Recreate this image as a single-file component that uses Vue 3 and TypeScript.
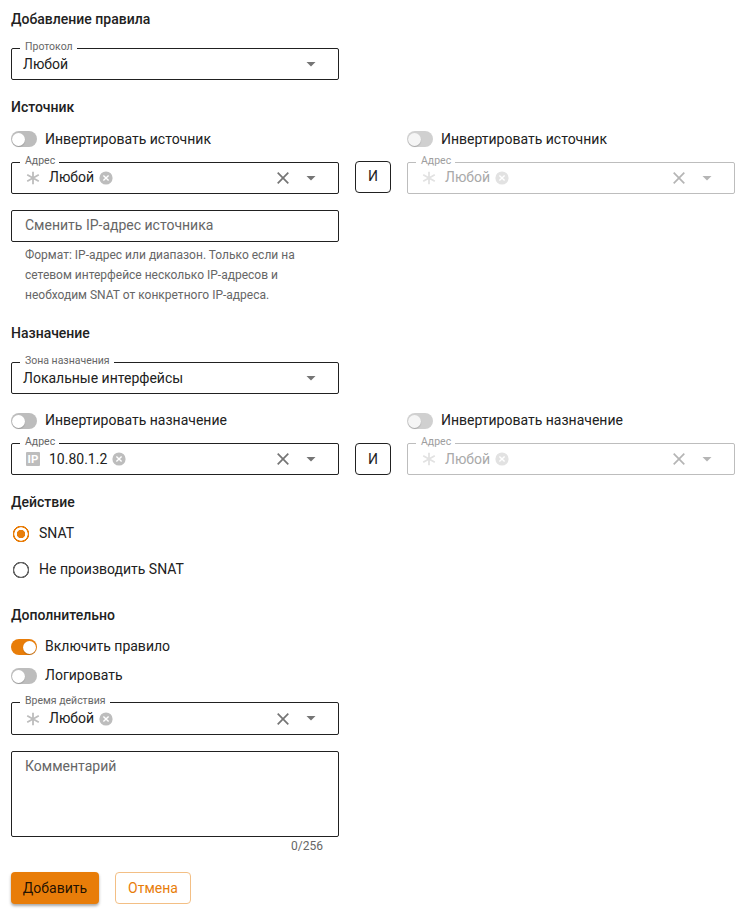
<script setup lang="ts">
import { defineComponent, h, ref } from 'vue'

interface AddressPair {
  invertLabel: string
  first: { kind: 'any' | 'ip'; value: string }
  second: { kind: 'any' | 'ip'; value: string }
}

const source: AddressPair = {
  invertLabel: 'Инвертировать источник',
  first: { kind: 'any', value: 'Любой' },
  second: { kind: 'any', value: 'Любой' },
}
const destination: AddressPair = {
  invertLabel: 'Инвертировать назначение',
  first: { kind: 'ip', value: '10.80.1.2' },
  second: { kind: 'any', value: 'Любой' },
}

const action = ref<'snat' | 'none'>('snat')
const enabled = ref(true)
const logging = ref(false)

const Caret = defineComponent(() => () =>
  h('svg', { width: 10, height: 5, viewBox: '0 0 10 5' }, [
    h('path', { d: 'M0.5 0H9.5L5 4.6Z', fill: 'currentColor' }),
  ]))

const Cross = defineComponent(() => () =>
  h('svg', { width: 12, height: 12, viewBox: '0 0 12 12' }, [
    h('path', { d: 'M0.7 0.7L11.3 11.3M11.3 0.7L0.7 11.3', stroke: 'currentColor', 'stroke-width': 1.7 }),
  ]))

const Remove = defineComponent(() => () =>
  h('svg', { width: 14, height: 14, viewBox: '0 0 14 14' }, [
    h('circle', { cx: 7, cy: 7, r: 6.6, fill: 'currentColor' }),
    h('path', { d: 'M4.4 4.4L9.6 9.6M9.6 4.4L4.4 9.6', stroke: '#fff', 'stroke-width': 1.4 }),
  ]))

const Kind = defineComponent({
  props: { kind: { type: String, required: true } },
  setup(props) {
    return () =>
      props.kind === 'ip'
        ? h('svg', { width: 14, height: 14, viewBox: '0 0 14 14' }, [
            h('rect', { width: 14, height: 14, rx: 1, fill: 'currentColor' }),
            h('text', {
              x: 7, y: 11, fill: '#fff', 'text-anchor': 'middle', 'font-size': 11.5,
              'font-weight': 700, 'font-family': 'Roboto, sans-serif',
            }, 'IP'),
          ])
        : h('svg', { width: 14, height: 14, viewBox: '0 0 14 14' }, [
            h('path', {
              d: 'M7 0.8V13.2M1.2 3.8L12.8 10.2M12.8 3.8L1.2 10.2',
              stroke: 'currentColor', 'stroke-width': 1.8,
            }),
          ])
  },
})
</script>

<template>
  <form class="rule-form" @submit.prevent>
    <h2 class="heading">Добавление правила</h2>
    <div class="field protocol">
      <span class="label">Протокол</span>
      <span class="value">Любой</span>
      <Caret class="caret" />
    </div>

    <h2 class="heading source-heading">Источник</h2>
    <div class="pair source-pair">
      <div class="side">
        <div class="switch-row"><span class="switch"></span>{{ source.invertLabel }}</div>
        <div class="field chips">
          <span class="label">Адрес</span>
          <Kind class="kind" :kind="source.first.kind" />
          <span class="value">{{ source.first.value }}</span>
          <Remove class="remove" />
          <Cross class="clear" />
          <Caret class="caret" />
        </div>
      </div>
      <button class="and" type="button">И</button>
      <div class="side">
        <div class="switch-row"><span class="switch off"></span>{{ source.invertLabel }}</div>
        <div class="field chips disabled">
          <span class="label">Адрес</span>
          <Kind class="kind" :kind="source.second.kind" />
          <span class="value">{{ source.second.value }}</span>
          <Remove class="remove" />
          <Cross class="clear" />
          <Caret class="caret" />
        </div>
      </div>
    </div>
    <div class="field input"><span class="placeholder">Сменить IP-адрес источника</span></div>
    <p class="hint">
      Формат: IP-адрес или диапазон. Только если на<br />сетевом интерфейсе несколько IP-адресов и<br />необходим SNAT от конкретного IP-адреса.
    </p>

    <h2 class="heading target-heading">Назначение</h2>
    <div class="field zone">
      <span class="label">Зона назначения</span>
      <span class="value">Локальные интерфейсы</span>
      <Caret class="caret" />
    </div>
    <div class="pair target-pair">
      <div class="side">
        <div class="switch-row"><span class="switch"></span>{{ destination.invertLabel }}</div>
        <div class="field chips">
          <span class="label">Адрес</span>
          <Kind class="kind" :kind="destination.first.kind" />
          <span class="value">{{ destination.first.value }}</span>
          <Remove class="remove" />
          <Cross class="clear" />
          <Caret class="caret" />
        </div>
      </div>
      <button class="and" type="button">И</button>
      <div class="side">
        <div class="switch-row"><span class="switch off"></span>{{ destination.invertLabel }}</div>
        <div class="field chips disabled">
          <span class="label">Адрес</span>
          <Kind class="kind" :kind="destination.second.kind" />
          <span class="value">{{ destination.second.value }}</span>
          <Remove class="remove" />
          <Cross class="clear" />
          <Caret class="caret" />
        </div>
      </div>
    </div>

    <h2 class="heading action-heading">Действие</h2>
    <div class="radios">
      <div class="radio-row" @click="action = 'snat'">
        <span class="radio" :class="{ checked: action === 'snat' }"></span>SNAT
      </div>
      <div class="radio-row" @click="action = 'none'">
        <span class="radio" :class="{ checked: action === 'none' }"></span>Не производить SNAT
      </div>
    </div>

    <h2 class="heading extra-heading">Дополнительно</h2>
    <div class="switches">
      <div class="switch-row" @click="enabled = !enabled">
        <span class="switch" :class="{ on: enabled }"></span>Включить правило
      </div>
      <div class="switch-row" @click="logging = !logging">
        <span class="switch" :class="{ on: logging }"></span>Логировать
      </div>
    </div>
    <div class="field chips time">
      <span class="label">Время действия</span>
      <Kind class="kind" kind="any" />
      <span class="value">Любой</span>
      <Remove class="remove" />
      <Cross class="clear" />
      <Caret class="caret" />
    </div>
    <div class="field comment"><span class="placeholder">Комментарий</span></div>
    <div class="counter">0/256</div>

    <div class="buttons">
      <button class="primary" type="submit">Добавить</button>
      <button class="secondary" type="button">Отмена</button>
    </div>
  </form>
</template>

<style>
body {
  background: #fff;
}
</style>

<style scoped>
.rule-form {
  box-sizing: border-box;
  width: 743px;
  height: 916px;
  padding: 9px 8px 0 11px;
  font: 400 14px/20px Roboto, sans-serif;
  color: #212121;
}
.heading {
  margin: 0;
  font-size: 14px;
  font-weight: 500;
  line-height: 20px;
}
.field {
  position: relative;
  box-sizing: border-box;
  display: flex;
  align-items: center;
  width: 328px;
  height: 32px;
  padding: 0 22px 0 11px;
  border: 1px solid #212121;
  border-radius: 2px;
}
.label {
  position: absolute;
  left: 8px;
  top: -9px;
  padding: 0 4px 0 5px;
  background: #fff;
  color: #666;
  font-size: 10.5px;
  line-height: 14px;
  white-space: nowrap;
}
.caret {
  flex: none;
  margin-left: auto;
  color: #757575;
}
.chips {
  padding-left: 14px;
}
.chips .value {
  margin-left: 9px;
  padding-bottom: 2px;
}
.target-pair .chips .value {
  padding-bottom: 0;
}
.kind,
.remove {
  flex: none;
  color: #bdbdbd;
}
.remove {
  margin-left: 5px;
}
.clear {
  flex: none;
  margin-left: auto;
  color: #757575;
}
.clear + .caret {
  margin-left: 17px;
}
.disabled {
  border-color: #bdbdbd;
}
.disabled .label {
  color: #9e9e9e;
}
.disabled .value {
  color: #a9a9a9;
}
.disabled .kind,
.disabled .remove {
  color: #e2e2e2;
}
.disabled .clear,
.disabled .caret {
  color: #b5b5b5;
}
.placeholder {
  color: #666;
}
.protocol {
  margin-top: 19px;
}
.source-heading {
  margin-top: 17px;
}
.pair {
  display: flex;
  gap: 16px;
  align-items: flex-end;
}
.source-pair {
  margin-top: 12px;
}
.target-pair {
  margin-top: 16px;
}
.side .field {
  margin-top: 13px;
}
.switch-row {
  display: flex;
  align-items: center;
  gap: 8px;
  height: 20px;
}
.switch {
  position: relative;
  width: 26px;
  height: 16px;
  border-radius: 8px;
  background: #bdbdbd;
}
.target-pair .switch,
.switches .switch {
  margin-top: 2px;
}
.switch::after {
  content: '';
  position: absolute;
  left: 1.3px;
  top: 1.5px;
  width: 13px;
  height: 13px;
  border-radius: 50%;
  background: #fff;
  box-shadow: 0 1px 1px rgba(0, 0, 0, 0.2);
}
.switch.on {
  background: #e87d09;
}
.switch.on::after {
  left: 12px;
}
.switch.off {
  background: #d0d0d0;
}
.switch.off::after {
  background: #f5f5f5;
}
.and {
  box-sizing: border-box;
  width: 36px;
  height: 32px;
  padding: 0;
  border: 1px solid #212121;
  border-radius: 4px;
  background: #fff;
  color: #212121;
  font: inherit;
}
.source-pair .and {
  margin-bottom: 1px;
  padding-bottom: 2px;
}
.input {
  margin-top: 16px;
  padding-left: 13px;
  padding-bottom: 2px;
}
.hint {
  margin: 3px 0 0 14px;
  color: #666;
  font-size: 12px;
  line-height: 20px;
}
.target-heading {
  margin-top: 18px;
}
.zone {
  margin-top: 19px;
}
.action-heading {
  margin-top: 17px;
}
.radios {
  display: flex;
  flex-direction: column;
  gap: 16px;
  margin-top: 11px;
}
.radio-row {
  display: flex;
  align-items: center;
  gap: 9px;
  height: 20px;
  padding-left: 1px;
}
.radio {
  width: 18px;
  height: 18px;
  margin-top: 1px;
  background: radial-gradient(circle, transparent 6.4px, #666 6.9px, #666 8px, transparent 8.5px);
}
.radio.checked {
  background: radial-gradient(circle, #e87d09 3.9px, transparent 4.5px, transparent 6.4px, #e87d09 6.9px, #e87d09 8px, transparent 8.5px);
}
.extra-heading {
  margin-top: 26px;
}
.switches {
  display: flex;
  flex-direction: column;
  gap: 9px;
  margin-top: 11px;
}
.time {
  height: 33px;
  margin-top: 17px;
}
.comment {
  align-items: flex-start;
  height: 86px;
  margin-top: 16px;
  padding: 4px 13px;
}
.counter {
  width: 312px;
  color: #666;
  font-size: 12px;
  line-height: 18px;
  text-align: right;
}
.buttons {
  display: flex;
  gap: 16px;
  margin-top: 17px;
}
.buttons button {
  box-sizing: border-box;
  height: 32px;
  padding: 0;
  border-radius: 4px;
  font: inherit;
}
.primary {
  width: 88px;
  border: 0;
  background: #e87d09;
  color: rgba(0, 0, 0, 0.87);
  box-shadow: 0 2px 3px rgba(0, 0, 0, 0.35);
}
.secondary {
  width: 76px;
  border: 1px solid #f3bf85;
  background: #fff;
  color: #e87d09;
}
</style>
